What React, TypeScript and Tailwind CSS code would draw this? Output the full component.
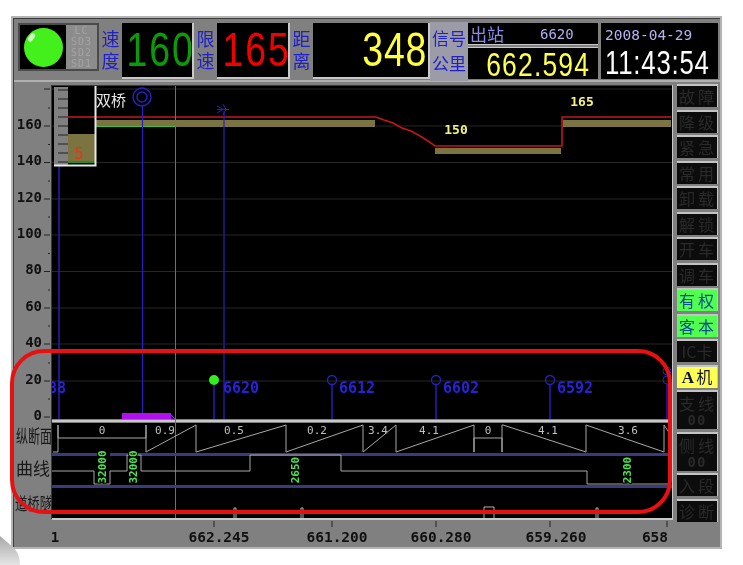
const cjk = "font-['Noto_Sans_CJK_SC','DejaVu_Sans',sans-serif]";
const digit = "font-['Liberation_Sans',sans-serif]";
const mono = "font-['DejaVu_Sans_Mono',monospace]";

const svgMono = "'DejaVu Sans Mono', monospace";
const svgCjk = "'Noto Sans CJK SC', sans-serif";

const yLabels = [
  { text: '160', y: 127 },
  { text: '140', y: 163.5 },
  { text: '120', y: 200 },
  { text: '100', y: 236 },
  { text: '80', y: 272.5 },
  { text: '60', y: 309 },
  { text: '40', y: 345 },
  { text: '20', y: 382 },
  { text: '0', y: 418 },
];

const signals = [
  { x: 332, label: '6612' },
  { x: 436, label: '6602' },
  { x: 550, label: '6592' },
];

const gradeLabels = [
  { x: 102, t: '0' },
  { x: 165, t: '0.9' },
  { x: 234, t: '0.5' },
  { x: 317, t: '0.2' },
  { x: 378, t: '3.4' },
  { x: 429, t: '4.1' },
  { x: 488, t: '0' },
  { x: 548, t: '4.1' },
  { x: 628, t: '3.6' },
];

const curveLabels = [
  { x: 102, y: 468, t: '32000' },
  { x: 133, y: 468, t: '32000' },
  { x: 295, y: 471, t: '2650' },
  { x: 627, y: 471, t: '2300' },
];

const axisLabels = [
  { x: 219, t: '662.245', tick: 214 },
  { x: 337, t: '661.200', tick: 332 },
  { x: 441, t: '660.280', tick: 436 },
  { x: 556, t: '659.260', tick: 550 },
  { x: 655, t: '658', tick: 667 },
];

type Btn = { top: string; sub?: string; tone?: 'green' | 'yellow'; tall?: boolean };

const buttons: Btn[] = [
  { top: '故障' },
  { top: '降级' },
  { top: '紧急' },
  { top: '常用' },
  { top: '卸载' },
  { top: '解锁' },
  { top: '开车' },
  { top: '调车' },
  { top: '有权', tone: 'green' },
  { top: '客本', tone: 'green' },
  { top: 'IC卡' },
  { top: 'A机', tone: 'yellow' },
  { top: '支线', sub: '00', tall: true },
  { top: '侧线', sub: '00', tall: true },
  { top: '入段' },
  { top: '诊断' },
];

function SideLabel({ a, b }: { a: string; b: string }) {
  return (
    <div className={`w-[23px] h-[56px] pb-[4px] flex flex-col items-center justify-center text-[18px] leading-[22px] text-[#2020c8] ${cjk}`}>
      <span>{a}</span>
      <span>{b}</span>
    </div>
  );
}

function BigNumber({ value, color, width }: { value: string; color: string; width: string }) {
  return (
    <div className={`${width} h-[56px] bg-black border-r-2 border-b-2 border-[#c8c8c8] flex items-center justify-center overflow-hidden`}>
      <span className={`text-[48px] leading-none scale-x-[0.78] tracking-[2.5px] pl-[10px] ${digit} ${color}`}>{value}</span>
    </div>
  );
}

function SideButton({ btn }: { btn: Btn }) {
  const tone =
    btn.tone === 'green'
      ? 'bg-[#50ff50] text-[#0a4a90]'
      : btn.tone === 'yellow'
        ? 'bg-[#ffff50] text-[#101040]'
        : 'bg-[#0c0c0c] text-[#2a2a2a]';
  return (
    <div
      className={`flex flex-col items-center justify-center border-t-2 border-r border-[#c4c4c4] text-[16px] leading-[19px] whitespace-nowrap overflow-hidden ${cjk} ${tone} ${btn.tall ? 'h-[39px]' : 'h-[23px]'}`}
    >
      {btn.top === 'A机' ? (
        <span>
          <span className="font-['Liberation_Serif',serif] font-bold text-[17px] mr-[2px]">A</span>机
        </span>
      ) : (
        <span className={btn.top === 'IC卡' ? 'tracking-[0px]' : 'tracking-[3px] pl-[2px]'}>{btn.top}</span>
      )}
      {btn.sub && <span className={`text-[14px] leading-[14px] font-bold tracking-[1px] ${mono}`}>{btn.sub}</span>}
    </div>
  );
}

function Chart() {
  const gridYs = yLabels.map((l) => l.y);
  return (
    <svg width={660} height={464} viewBox="14 83 660 464" className="block shrink-0">
      <defs>
        <clipPath id="plot-clip">
          <rect x={52} y={87} width={620} height={333} />
        </clipPath>
      </defs>

      {/* y scale */}
      {yLabels.map((l) => (
        <g key={l.text}>
          <text x={42} y={l.y + 2.5} textAnchor="end" fontFamily={svgMono} fontSize={14} fontWeight="bold" fill="#101010">
            {l.text}
          </text>
          <line x1={44} x2={50} y1={l.y} y2={l.y} stroke="#222" />
          <line x1={48} x2={50} y1={l.y - 18} y2={l.y - 18} stroke="#222" />
        </g>
      ))}
      <line x1={44} x2={50} y1={90} y2={90} stroke="#222" />

      {/* plot frame */}
      <rect x={52} y={87} width={620} height={333} fill="#000" />
      <rect x={52} y={424} width={620} height={95} fill="#000" />
      <line x1={51.5} x2={51.5} y1={86} y2={520} stroke="#3a3a3a" />
      <line x1={52} x2={673} y1={86.5} y2={86.5} stroke="#3a3a3a" />
      <rect x={52} y={421} width={621} height={2} fill="#c8c8c8" />
      <rect x={52} y={519} width={621} height={2} fill="#c8c8c8" />
      <line x1={672.5} x2={672.5} y1={86} y2={521} stroke="#c8c8c8" />
      {gridYs.slice(0, -1).map((y) => (
        <line key={y} x1={52} x2={672} y1={y} y2={y} stroke="#262626" />
      ))}
      <line x1={52} x2={672} y1={90} y2={90} stroke="#262626" />

      {/* speed bars */}
      <rect x={96} y={121} width={279} height={7} fill="#7b7340" />
      <rect x={435} y={149} width={126} height={6} fill="#7b7340" />
      <rect x={563} y={121} width={108} height={7} fill="#7b7340" />
      <line x1={96} x2={175} y1={127.5} y2={127.5} stroke="#40c040" />
      <polyline
        points="68,118 376,118 384,121 393,124 402,129 411,132 420,137 428,142 435,147 562,147 562,118 671,118"
        fill="none"
        stroke="#c01818"
        strokeWidth={1.6}
      />
      <text x={456} y={135} textAnchor="middle" fontFamily={svgMono} fontSize={13} fontWeight="bold" fill="#f4f480">150</text>
      <text x={582} y={107} textAnchor="middle" fontFamily={svgMono} fontSize={13} fontWeight="bold" fill="#f4f480">165</text>

      {/* km markers */}
      <line x1={59} x2={59} y1={167} y2={420} stroke="#2a20c0" strokeWidth={1.4} />
      <line x1={142.5} x2={142.5} y1={107} y2={420} stroke="#2a20c0" strokeWidth={1.2} />
      <line x1={224} x2={224} y1={112} y2={420} stroke="#2a20c0" strokeWidth={1.2} />
      <circle cx={142} cy={98} r={9} fill="none" stroke="#2a20c0" strokeWidth={1.4} />
      <circle cx={142} cy={98} r={5} fill="none" stroke="#2a20c0" strokeWidth={1.4} />
      <path d="M217 107 L223 110.5 L217 114 M217 110.5 H229 M223 105 L226 110.5 L223 116" fill="none" stroke="#2a20c0" />
      <line x1={175.5} x2={175.5} y1={87} y2={519} stroke="#77773a" />
      <text x={96} y={107} fontFamily={svgCjk} fontSize={15} fill="#e8e8e8">双桥</text>

      {/* signals */}
      <line x1={214} x2={214} y1={384} y2={420} stroke="#2a20c0" strokeWidth={1.4} />
      <circle cx={214} cy={381} r={5} fill="#30f020" />
      <text x={223} y={394} fontFamily={svgMono} fontSize={15} fontWeight="bold" fill="#2a20d8" textLength={36}>6620</text>
      {signals.map((s) => (
        <g key={s.x}>
          <circle cx={s.x} cy={381} r={4.5} fill="none" stroke="#2a20c0" strokeWidth={1.3} />
          <line x1={s.x} x2={s.x} y1={386} y2={420} stroke="#2a20c0" strokeWidth={1.4} />
          <text x={s.x + 7} y={394} fontFamily={svgMono} fontSize={15} fontWeight="bold" fill="#2a20d8" textLength={36}>{s.label}</text>
        </g>
      ))}
      <circle cx={667} cy={372} r={4} fill="none" stroke="#2a20c0" />
      <circle cx={667} cy={381} r={4} fill="none" stroke="#2a20c0" />
      <line x1={667} x2={667} y1={385} y2={420} stroke="#2a20c0" strokeWidth={1.4} />
      <text x={48} y={394} clipPath="url(#plot-clip)" fontFamily={svgMono} fontSize={15} fontWeight="bold" fill="#2a20d8" textLength={18}>88</text>
      <rect x={122} y={414} width={49} height={6} fill="#b010f0" />
      <path d="M171 416 L175 420 L171 420" fill="none" stroke="#8030c0" />

      {/* gauge inset */}
      <rect x={54} y={88} width={14} height={78} fill="#808080" />
      <rect x={68} y={88} width={27} height={78} fill="#000" />
      <rect x={68} y={135} width={27} height={28} fill="#7b7340" />
      <line x1={68} x2={95} y1={118} y2={118} stroke="#c01818" strokeWidth={1.6} />
      <rect x={68} y={162} width={27} height={2} fill="#209020" />
      {[91, 100, 109, 118, 127, 136, 145, 154, 163].map((y) => (
        <line key={y} x1={58} x2={68} y1={y} y2={y} stroke="#202020" />
      ))}
      <text x={79} y={160} textAnchor="middle" fontFamily={svgMono} fontSize={15} fill="#f03018">5</text>
      <path d="M95.5 87 V166.5 H54" fill="none" stroke="#e8e8e8" strokeWidth={2} />

      {/* grade profile */}
      <polyline
        points="53,453 58,453 58,426 58,439 146,439 146,426 146,453 196,426 196,453 286,426 286,453 363,426 363,453 396,426 396,453 474,426 474,453 474,439 502,439 502,453 502,426 503,426 586,453 586,426 664,453 664,426 670,435"
        fill="none"
        stroke="#a8a8a8"
      />
      {gradeLabels.map((g) => (
        <text key={g.x} x={g.x} y={435} textAnchor="middle" fontFamily={svgMono} fontSize={11} fill="#c0c0c0">{g.t}</text>
      ))}
      <rect x={52} y={454} width={620} height={3} fill="#3a3a80" />
      <rect x={52} y={486} width={620} height={3} fill="#3a3a80" />

      {/* curve row */}
      <rect x={97} y={452} width={13} height={6} fill="#000" />
      <polyline
        points="52,472 94,472 94,485 110,485 110,472 127,472 127,456 141,456 141,472 250,472 250,456 341,456 341,472 587,472 587,485 671,485"
        fill="none"
        stroke="#a8a8a8"
      />
      {curveLabels.map((c) => (
        <text
          key={c.x}
          x={c.x}
          y={c.y}
          transform={`rotate(-90 ${c.x} ${c.y})`}
          textAnchor="middle"
          dominantBaseline="central"
          fontFamily={svgMono}
          fontSize={11}
          fontWeight="bold"
          fill="#50e050"
          stroke="#000"
          strokeWidth={2}
          paintOrder="stroke"
        >
          {c.t}
        </text>
      ))}

      {/* bridge row */}
      <path d="M234 519 V509 H236 V519 M301 519 V509 H303 V519 M484 519 V508 H494 V519 M596 519 V509 H598 V519" fill="none" stroke="#b0b0b0" />

      {/* row labels */}
      <text x={16} y={444} fontFamily={svgCjk} fontSize={18} fill="#181818" textLength={36} lengthAdjust="spacingAndGlyphs">纵断面</text>
      <text x={16} y={476} fontFamily={svgCjk} fontSize={17} fill="#181818">曲线</text>
      <text x={15} y={511} fontFamily={svgCjk} fontSize={17} fill="#181818" textLength={37} lengthAdjust="spacingAndGlyphs">道桥隧</text>

      {/* x axis */}
      <text x={55} y={543} textAnchor="middle" fontFamily={svgMono} fontSize={14} fontWeight="bold" fill="#101010">1</text>
      {axisLabels.map((a) => (
        <g key={a.t}>
          <line x1={a.tick} x2={a.tick} y1={522} y2={528} stroke="#222" />
          <text x={a.x} y={543} textAnchor="middle" fontFamily={svgMono} fontSize={14.5} fontWeight="bold" fill="#101010">{a.t}</text>
        </g>
      ))}
    </svg>
  );
}

export default function App() {
  return (
    <div className="relative w-[743px] h-[565px] bg-white overflow-hidden blur-[0.4px]">
      <div className="ml-[11px] pt-4">
        <div className="w-[711px] h-[533px] border-2 border-[#b4b4b4] bg-[#808080]">
          <div className="w-[707px] h-[529px] border-t border-l border-[#3c3c3c]">
            {/* header */}
            <div className="flex h-[63px] pl-[4px] pt-[4px] border-b-2 border-[#b0b0b0]">
              <div className="flex w-[81px] h-[48px] border-2 border-[#4a4a4a]">
                <div className="w-[46px] bg-black flex items-center justify-center">
                  <div className="relative w-[39px] h-[39px] rounded-full bg-[#44f01c]">
                    <div className="absolute left-[5px] top-[5px] w-[5px] h-[9px] rotate-[35deg] rounded-full bg-[#c8ffc0]" />
                  </div>
                </div>
                <div className={`flex-1 flex flex-col justify-between bg-[#4a4a4a] text-[10px] leading-[11px] text-[#a4a4a4] text-center tracking-[1px] ${mono}`}>
                  {['LC', 'SD3', 'SD2', 'SD1'].map((t) => (
                    <div key={t} className="bg-[#8c8c8c]">{t}</div>
                  ))}
                </div>
              </div>
              <SideLabel a="速" b="度" />
              <BigNumber value="160" color="text-[#0a9a0a]" width="w-[72px]" />
              <SideLabel a="限" b="速" />
              <BigNumber value="165" color="text-[#f00000]" width="w-[73px]" />
              <SideLabel a="距" b="离" />
              <div className="w-[117px] h-[56px] bg-black border-r-2 border-b-2 border-[#c8c8c8] flex items-center justify-end overflow-hidden pr-[1px]">
                <span className={`text-[48px] leading-none text-[#ffff40] scale-x-[0.78] origin-right tracking-[1px] ${digit}`}>348</span>
              </div>
              <div className={`w-[38px] h-[59px] -mt-[1px] bg-[#9c9ca8] flex flex-col items-center justify-center gap-[3px] pb-[3px] text-[17px] leading-[22px] text-[#2020c8] ${cjk}`}>
                <span>信号</span>
                <span>公里</span>
              </div>
              <div className="w-[130px] h-[56px] flex flex-col justify-between">
                <div className="h-[22px] bg-black flex items-center pl-[2px] border-b border-[#c8c8c8]">
                  <span className={`w-[52px] text-[17px] leading-none text-[#8c8ce8] ${cjk}`}>出站</span>
                  <span className={`ml-[18px] text-[14px] leading-none text-[#b0b0f0] ${mono}`}>6620</span>
                </div>
                <div className="h-[32px] bg-black border-t border-[#c8c8c8] flex items-center justify-center">
                  <span className={`text-[34px] leading-none text-[#ffff50] scale-x-[0.78] tracking-[1.5px] pl-[14px] ${digit}`}>662.594</span>
                </div>
              </div>
              <div className="ml-[3px] w-[117px] h-[56px] bg-black flex flex-col pl-[4px]">
                <span className={`text-[14.5px] leading-[24px] text-[#b4b4f0] ${mono}`}>2008-04-29</span>
                <span className={`text-[34px] leading-[30px] text-white scale-x-[0.76] tracking-[1px] origin-left whitespace-nowrap ${digit}`}>11:43:54</span>
              </div>
            </div>

            {/* main */}
            <div className="flex">
              <Chart />
              <div className="ml-[3px] w-[41px] h-[438px] mt-[2px] flex flex-col justify-between">
                {buttons.map((b) => (
                  <SideButton key={b.top} btn={b} />
                ))}
              </div>
            </div>
          </div>
        </div>
      </div>

      {/* red annotation */}
      <div className="absolute left-[10px] top-[349px] w-[662px] h-[165px] rounded-[34px] border-4 border-[#e81010]" />

      {/* corner scrap */}
      <svg width={24} height={30} viewBox="0 0 24 30" className="absolute left-0 bottom-0">
        <defs>
          <linearGradient id="scrap" x1="0" y1="0" x2="0" y2="1">
            <stop offset="0" stopColor="#a8a8a8" />
            <stop offset="1" stopColor="#e4e4e4" />
          </linearGradient>
        </defs>
        <path d="M0 1 L14 13 Q20 20 20 30 L0 30 Z" fill="url(#scrap)" />
      </svg>
    </div>
  );
}
